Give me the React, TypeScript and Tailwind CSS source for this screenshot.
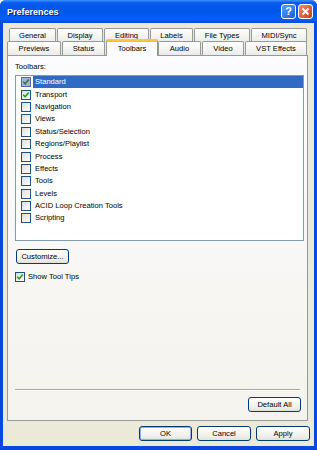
import React from "react";

const rowItems = [
  { label: "Standard", checked: true, selected: true },
  { label: "Transport", checked: true },
  { label: "Navigation" },
  { label: "Views" },
  { label: "Status/Selection" },
  { label: "Regions/Playlist" },
  { label: "Process" },
  { label: "Effects" },
  { label: "Tools" },
  { label: "Levels" },
  { label: "ACID Loop Creation Tools" },
  { label: "Scripting" },
];

const row1 = [
  { label: "General", w: "w-[47px]" },
  { label: "Display", w: "w-[46px]" },
  { label: "Editing", w: "w-[45px]" },
  { label: "Labels", w: "w-[43px]" },
  { label: "File Types", w: "w-[56px]" },
  { label: "MIDI/Sync", w: "w-[56px]" },
];

const row2 = [
  { label: "Previews", w: "w-[54px]" },
  { label: "Status", w: "w-[43px]" },
  { label: "Toolbars", w: "w-[54px]", active: true },
  { label: "Audio", w: "w-[43px]" },
  { label: "Video", w: "w-[42px]" },
  { label: "VST Effects", w: "w-[62px]" },
];

function CheckBox({ checked, muted }: { checked?: boolean; muted?: boolean }) {
  return (
    <span
      className={`flex items-center justify-center w-[10px] h-[10px] border shrink-0 ${
        muted
          ? "border-[#4d6f9f] bg-[#a4b6d4]"
          : "border-[#1c5180] bg-[linear-gradient(135deg,#dcdcd7,#ffffff)]"
      }`}
    >
      {checked && (
        <svg width="8" height="8" viewBox="0 0 8 8">
          <path d="M1.2 3.8 L3.2 5.8 L6.8 1.6" fill="none" stroke={muted ? "#3d6e46" : "#21a121"} strokeWidth="1.6" />
        </svg>
      )}
    </span>
  );
}

function Tab({ label, w }: { label: string; w: string }) {
  return (
    <div
      className={`${w} h-[14px] flex items-center justify-center border border-[#919b9c] border-b-0 rounded-t-[2px] bg-[linear-gradient(180deg,#ffffff,#ecebe6)]`}
    >
      {label}
    </div>
  );
}

function Button({ label, w, focus }: { label: string; w: string; focus?: boolean }) {
  return (
    <div
      className={`${w} h-[15px] flex items-center justify-center rounded-[3px] border border-[#003c74] bg-[linear-gradient(180deg,#ffffff,#f0efea_70%,#e3e1d6)] ${
        focus ? "shadow-[inset_0_0_0_1px_#8fb1f0]" : ""
      }`}
    >
      {label}
    </div>
  );
}

export default function App() {
  return (
    <div className="w-[317px] h-[450px] flex flex-col bg-[#0a46e0] rounded-t-[6px] overflow-hidden font-['Liberation_Sans',Arial,sans-serif] text-[7.6px] leading-[10px] text-black">
      {/* Title bar */}
      <div className="h-[23px] shrink-0 flex items-center pl-[7px] pr-[4px] bg-[linear-gradient(180deg,#3d95ff_0%,#0a5bef_12%,#0055e8_45%,#0060f6_85%,#0048d8_100%)]">
        <span className="text-white font-bold text-[9px] [text-shadow:1px_1px_0_#0a1e7a]">Preferences</span>
        <div className="ml-auto flex gap-[2px]">
          <div className="w-[15px] h-[15px] rounded-[3px] border border-white bg-[linear-gradient(135deg,#5aa0ff,#1f5ad8)] flex items-center justify-center text-white font-bold text-[11px] leading-none">
            ?
          </div>
          <div className="w-[15px] h-[15px] rounded-[3px] border border-white bg-[linear-gradient(135deg,#f08a6a,#c9401a)] flex items-center justify-center">
            <svg width="9" height="9" viewBox="0 0 9 9">
              <path d="M1.5 1.5 L7.5 7.5 M7.5 1.5 L1.5 7.5" stroke="white" strokeWidth="1.8" />
            </svg>
          </div>
        </div>
      </div>

      {/* Body */}
      <div className="flex-1 mx-[3px] mb-[4px] bg-[#ece9d8] flex flex-col">
        {/* Tabs */}
        <div className="pt-[5px] ml-[4px] mr-[6px]">
          <div className="flex gap-[1px] ml-[2px]">
            {row1.map((t) => (
              <Tab key={t.label} label={t.label} w={t.w} />
            ))}
          </div>
          <div className="flex -mt-[1px] items-end h-[14px]">
            {row2.map((t) =>
              t.active ? (
                <div
                  key={t.label}
                  className={`${t.w} h-[17px] -mb-[1px] relative z-10 flex items-center justify-center border-x border-[#919b9c] bg-[#fcfcfe] rounded-t-[2px] border-t-2 border-t-[#ffc83c] shadow-[inset_0_1px_0_#f5b94a]`}
                >
                  {t.label}
                </div>
              ) : (
                <div key={t.label} className="mr-[1px]">
                  <Tab label={t.label} w={t.w} />
                </div>
              )
            )}
          </div>
        </div>

        {/* Panel */}
        <div className="h-[366px] ml-[4px] mr-[6px] border border-[#919b9c] bg-[linear-gradient(180deg,#fcfcfe,#f4f3ee)] flex flex-col pl-[7px] pr-[4px] pt-[6px] pb-[8px]">
          <div>Toolbars:</div>
          <div className="mt-[3px] w-[289px] h-[166px] border border-[#7f9db9] bg-white pl-[5px]">
            {rowItems.map((r) => (
              <div key={r.label} className="h-[12.4px] flex items-center">
                <CheckBox checked={r.checked} muted={r.selected} />
                <span
                  className={`ml-[2px] flex-1 h-full flex items-center pl-[2px] ${
                    r.selected ? "bg-[#316ac5] text-white h-[13px]" : ""
                  }`}
                >
                  {r.label}
                </span>
              </div>
            ))}
          </div>
          <div className="mt-[8px] ml-[1px]">
            <Button label="Customize..." w="w-[53px]" />
          </div>
          <div className="mt-[8px] flex items-center">
            <CheckBox checked />
            <span className="ml-[3px]">Show Tool Tips</span>
          </div>
          <div className="flex-1" />
          <div className="h-[2px] mr-[3px] border-t border-[#aca899] border-b border-b-white" />
          <div className="mt-[6px] ml-auto mr-[2px]">
            <Button label="Default All" w="w-[53px]" />
          </div>
        </div>

        {/* Footer buttons */}
        <div className="mt-[5px] flex justify-end gap-[5px] pr-[4px]">
          <Button label="OK" w="w-[53px]" focus />
          <Button label="Cancel" w="w-[54px]" />
          <Button label="Apply" w="w-[54px]" />
        </div>
      </div>
    </div>
  );
}
